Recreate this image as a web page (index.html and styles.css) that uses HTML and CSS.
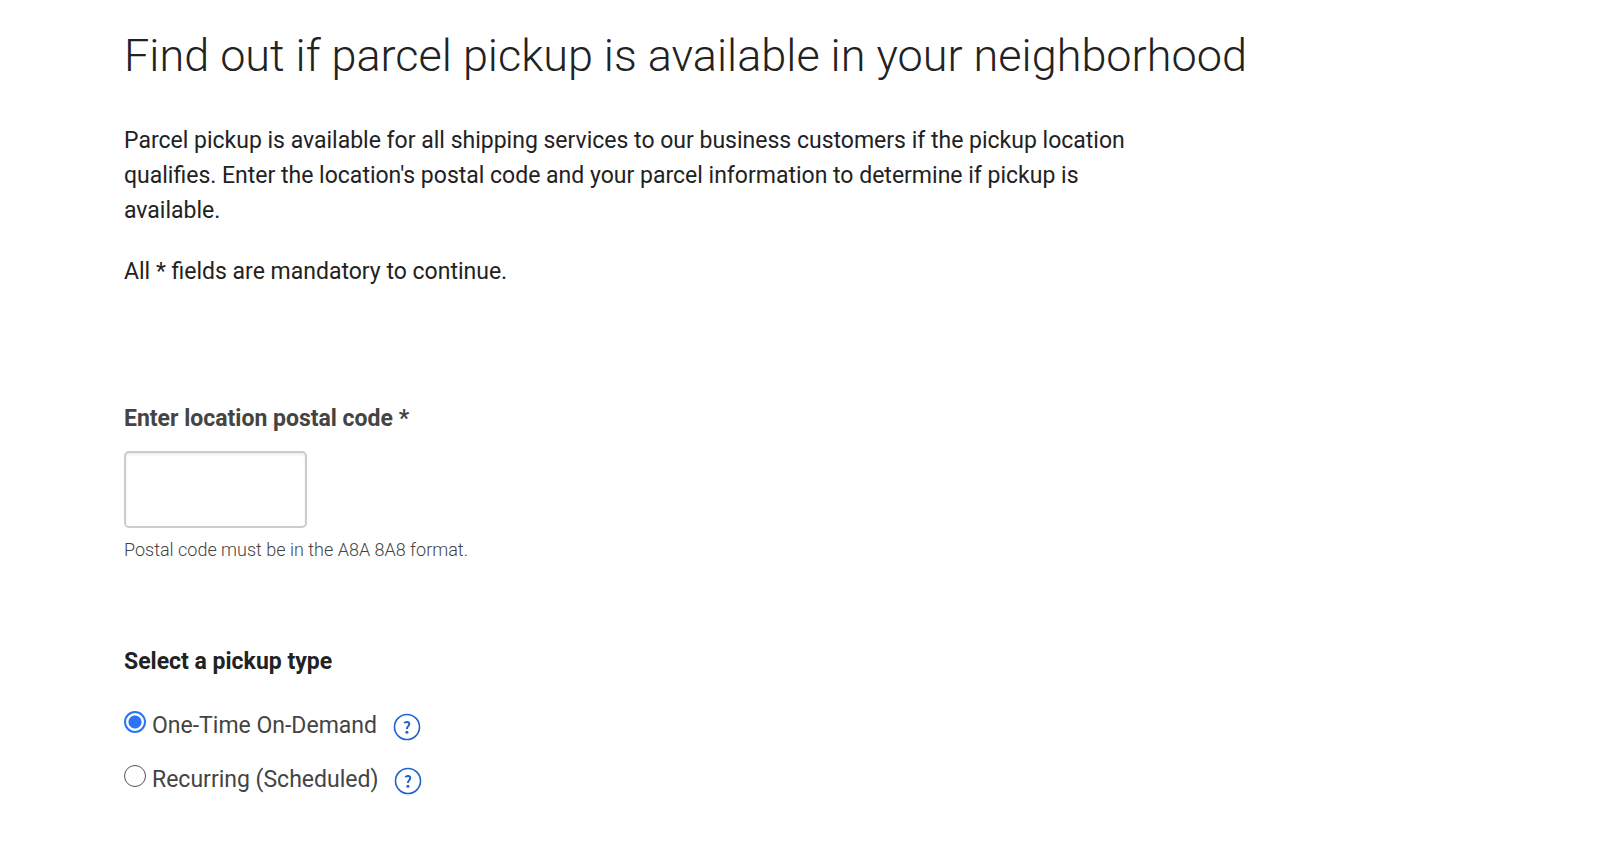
FILE: index.html
```html
<!DOCTYPE html>
<html lang="en">
<head>
<meta charset="utf-8">
<meta name="viewport" content="width=device-width, initial-scale=1">
<title>Parcel pickup</title>
<link rel="stylesheet" href="styles.css">
</head>
<body>
<main class="page">
  <h1 class="title">Find out if parcel pickup is available in your neighborhood</h1>
  <div class="intro">
    <p>Parcel pickup is available for all shipping services to our business customers if the pickup location qualifies. Enter the location's postal code and your parcel information to determine if pickup is available.</p>
    <p>All * fields are mandatory to continue.</p>
  </div>
  <form class="form">
    <div class="field">
      <label class="field-label" for="postal">Enter location postal code *</label>
      <input class="field-input" id="postal" type="text" aria-describedby="postal-hint">
      <p class="field-hint" id="postal-hint">Postal code must be in the A8A 8A8 format.</p>
    </div>
    <fieldset class="types">
      <legend class="types-title">Select a pickup type</legend>
      <div class="option">
        <input class="radio" type="radio" name="type" id="once" checked>
        <label class="option-label" for="once">One-Time On-Demand</label>
        <button class="help" type="button" aria-label="About one-time pickup">
          <svg class="help-icon" viewBox="0 0 28 28"><circle class="ring" cx="14" cy="14" r="12.5"/><path d="M11.3 10.200c.6-.8 1.500-1.200 2.600-1.200 1.500 0 2.400.8 2.400 2.100 0 2-2.400 2.200-2.400 4.800"/><circle class="dot" cx="13.900" cy="19.200" r="1.500"/></svg>
        </button>
      </div>
      <div class="option">
        <input class="radio" type="radio" name="type" id="recurring">
        <label class="option-label" for="recurring">Recurring (Scheduled)</label>
        <button class="help" type="button" aria-label="About recurring pickup">
          <svg class="help-icon" viewBox="0 0 28 28"><circle class="ring" cx="14" cy="14" r="12.5"/><path d="M11.3 10.200c.6-.8 1.500-1.200 2.600-1.200 1.500 0 2.400.8 2.400 2.100 0 2-2.400 2.200-2.400 4.800"/><circle class="dot" cx="13.900" cy="19.200" r="1.500"/></svg>
        </button>
      </div>
    </fieldset>
  </form>
</main>
</body>
</html>
```

FILE: styles.css
```css
* { box-sizing: border-box; }
body {
  margin: 0;
  background: #fff;
  color: #222;
  font: 400 23px/35px Roboto, sans-serif;
}
.page { padding: 28px 124px 32px; }
.title {
  margin: 0 0 37px;
  font-size: 45px;
  font-weight: 300;
  line-height: 56px;
  padding-bottom: 2px;
}
.intro { max-width: 1040px; }
.intro p { margin: 0 0 26px; }
.form { padding-top: 86px; }
.field { display: flex; flex-direction: column; align-items: flex-start; }
.field-label { color: #444; font-weight: 700; }
.field-input {
  width: 183px;
  height: 77px;
  margin-top: 15px;
  padding: 0 16px;
  border: 2px solid #ccc;
  border-radius: 5px;
  box-shadow: inset 0 2px 3px #eee;
  font: inherit;
}
.field-hint {
  margin: 8px 0 0;
  color: #444;
  font-size: 18px;
  font-weight: 300;
  line-height: 28px;
}
.types { margin: 80px 0 0; padding: 0; border: 0; min-width: 0; }
.types-title { margin-bottom: 29px; padding: 0; font-weight: 700; }
.option { display: flex; align-items: center; margin-bottom: 19px; color: #444; }
.radio {
  appearance: none;
  width: 22px;
  height: 22px;
  margin: 0 6px 8px 0;
  border: 1px solid #555;
  border-radius: 50%;
  background: #fff;
}
.radio:checked { border: 2px solid #2b74f5; background: radial-gradient(circle, #2b74f5 6px, #fff 7px); }
.help { width: 28px; height: 28px; margin: 2px 0 0 16px; padding: 0; border: 0; background: none; }
.help-icon { display: block; fill: none; stroke: #2163c9; stroke-width: 2; }
.ring { stroke-width: 1.6; }
.dot { fill: #2163c9; stroke: none; }
```
